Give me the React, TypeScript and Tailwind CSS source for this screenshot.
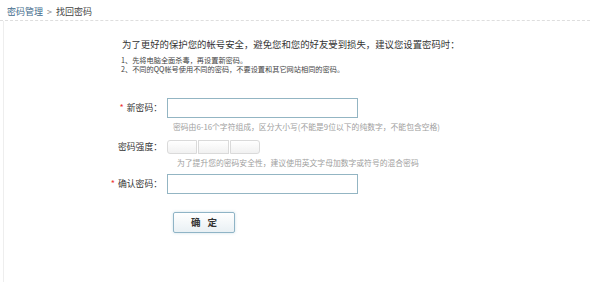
const font = { fontFamily: '"Noto Sans CJK SC", "Noto Sans", sans-serif' };

const Label = ({ text, required }: { text: string; required?: boolean }) => (
  <div className="flex w-[160px] shrink-0 items-center justify-end pr-[2px] text-[8.8px] leading-[12px] text-[#333]">
    {required && <span className="mr-[3px] text-[9px] text-[#e33]">*</span>}
    {text}
  </div>
);

const Hint = ({ children }: { children: React.ReactNode }) => (
  <p className="pl-[169px] text-[7.8px] leading-[10px] text-[#a0a0a0]">{children}</p>
);

export default function App() {
  return (
    <div className="h-[282px] w-[590px] overflow-hidden bg-white" style={font}>
      {/* Breadcrumb */}
      <div className="flex h-[20px] items-center pl-[7px] pt-[4px] text-[9px] leading-[12px]">
        <a className="text-[#3f6b8c]">密码管理</a>
        <span className="mx-[4px] text-[#888]">&gt;</span>
        <span className="text-[#444]">找回密码</span>
      </div>
      <div className="border-t border-dashed border-[#dedede]" />

      <div className="ml-[3px] h-[261px] border-l border-[#eeeeee]">
        {/* Intro */}
        <p className="pl-[118px] pt-[17px] text-[9.4px] leading-[12px] text-[#333]">
          为了更好的保护您的帐号安全，避免您和您的好友受到损失，建议您设置密码时：
        </p>
        <ol className="mt-[6px] pl-[117px] text-[7.2px] leading-[9px] text-[#444]">
          <li>1、先将电脑全面杀毒，再设置新密码。</li>
          <li>2、不同的QQ帐号使用不同的密码，不要设置和其它网站相同的密码。</li>
        </ol>

        {/* New password */}
        <div className="mt-[24px] flex items-center">
          <Label text="新密码：" required />
          <input className="ml-[3px] h-[20px] w-[191px] border border-[#93b5c3] bg-white outline-none" />
        </div>
        <div className="mt-[4px]">
          <Hint>密码由6-16个字符组成，区分大小写(不能是9位以下的纯数字，不能包含空格)</Hint>
        </div>

        {/* Strength */}
        <div className="mt-[8px] flex items-center">
          <Label text="密码强度：" />
          <div className="ml-[3px] flex h-[14px] w-[93px] gap-[1px]">
            <div className="flex-1 rounded-l-[3px] border border-[#dadada] bg-gradient-to-b from-white to-[#f1f1f1]" />
            <div className="flex-1 border border-[#dadada] bg-gradient-to-b from-white to-[#f1f1f1]" />
            <div className="flex-1 rounded-r-[3px] border border-[#dadada] bg-gradient-to-b from-white to-[#f1f1f1]" />
          </div>
        </div>
        <div className="mt-[4px]">
          <Hint>
            <span className="pl-[4px]">为了提升您的密码安全性，建议使用英文字母加数字或符号的混合密码</span>
          </Hint>
        </div>

        {/* Confirm */}
        <div className="mt-[6px] flex items-center">
          <Label text="确认密码：" required />
          <input className="ml-[3px] h-[20px] w-[191px] border border-[#93b5c3] bg-white outline-none" />
        </div>

        {/* Submit */}
        <div className="mt-[18px] pl-[169px]">
          <button className="flex h-[21px] w-[62px] items-center justify-center rounded-[2px] border border-[#8fb4c6] bg-gradient-to-b from-white to-[#e9f0f4] text-[9.5px] font-bold tracking-[7px] text-[#333] shadow-[0_0_3px_rgba(140,180,200,0.45)]">
            <span className="pl-[7px]">确定</span>
          </button>
        </div>
      </div>
    </div>
  );
}
